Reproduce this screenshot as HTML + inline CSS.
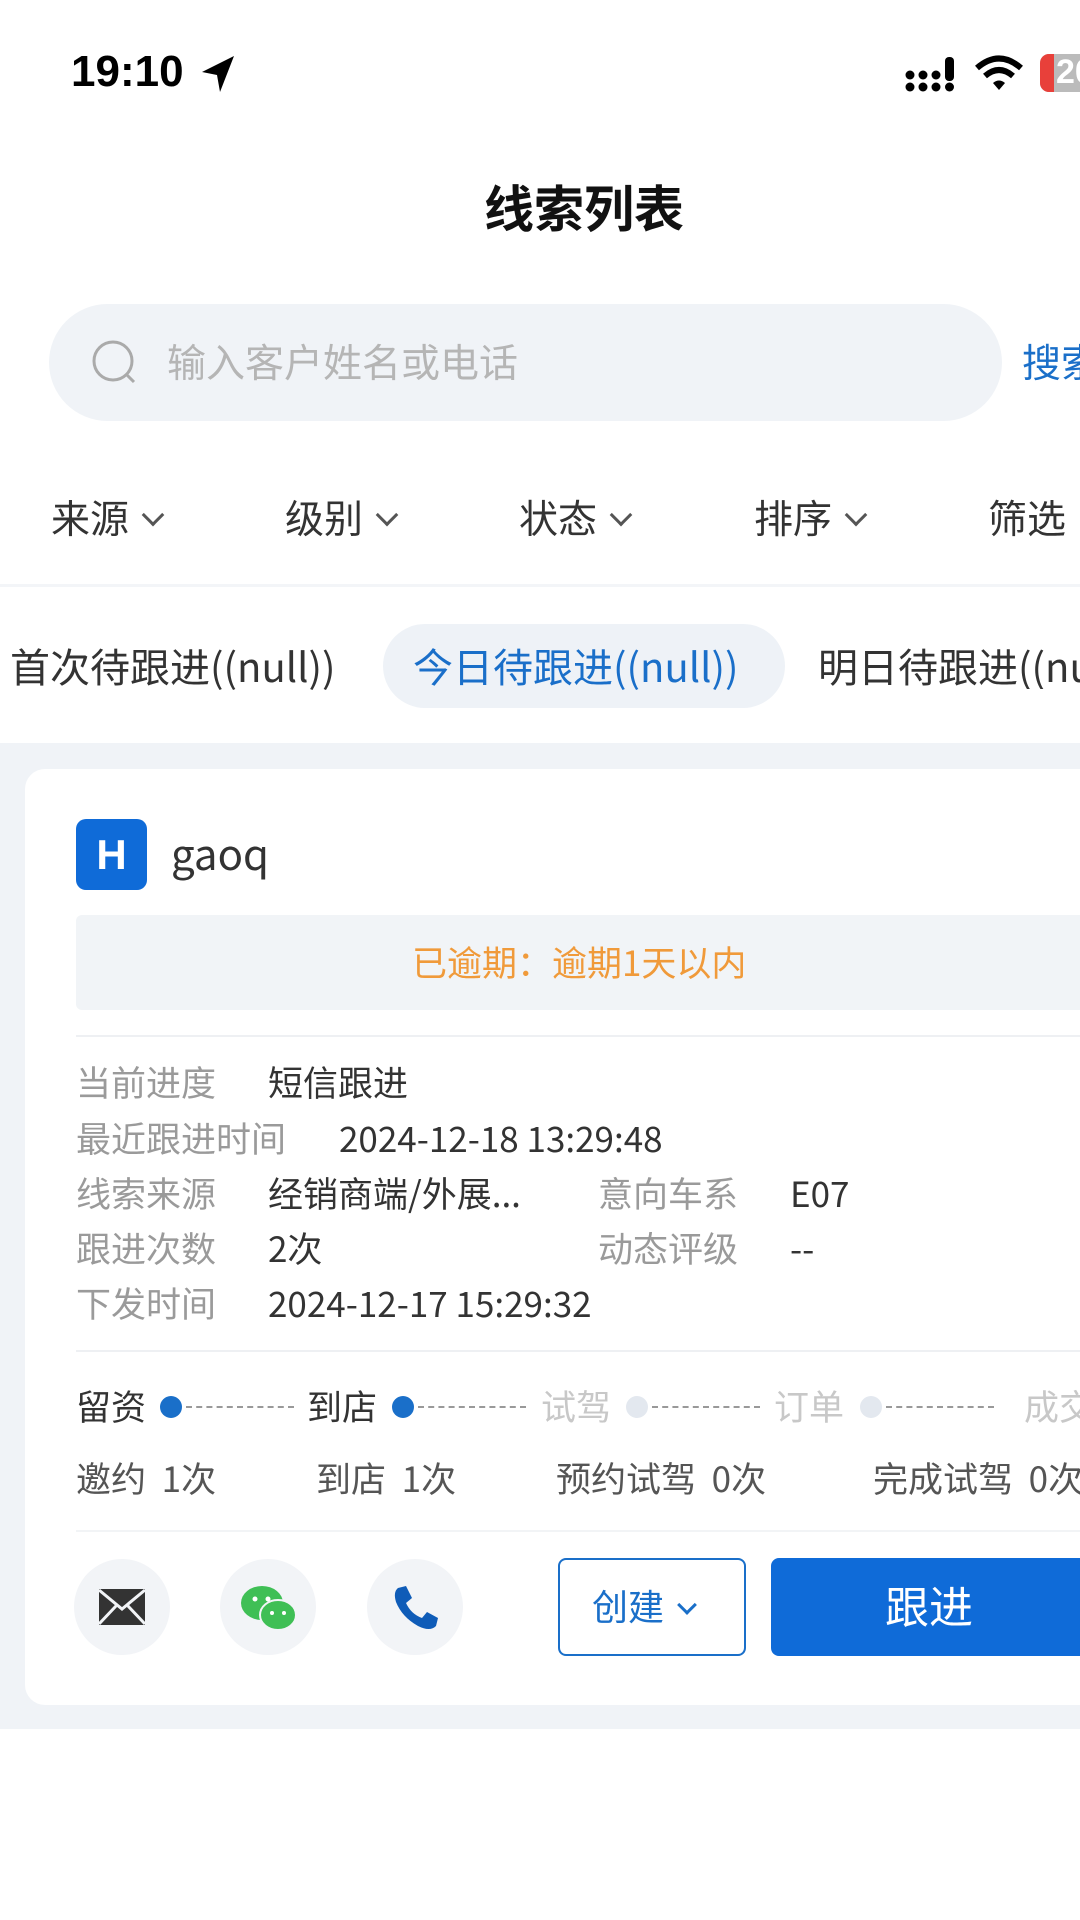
<!DOCTYPE html>
<html><head><meta charset="utf-8"><style>
*{margin:0;padding:0;box-sizing:border-box}
html,body{overflow:hidden}
body{width:1080px;height:1920px;background:#fff;font-family:"Noto Sans CJK SC","Liberation Sans",sans-serif;position:relative;overflow:hidden;color:#333}
.a{position:absolute;white-space:nowrap;line-height:1.2}
.lbl{color:#9a9a9a;font-size:35px}
.val{color:#333;font-size:35px}
.chev{display:inline-block;width:16px;height:16px;border-right:3px solid #555;border-bottom:3px solid #555;transform:rotate(45deg);margin-left:16px;position:relative;top:-10px}
</style></head><body>
<div class="a" style="left:71px;top:46px;font-size:44px;font-weight:bold;color:#000;font-family:'Liberation Sans',sans-serif">19:10</div>
<svg class="a" style="left:200px;top:54px" width="36" height="40" viewBox="0 0 36 40"><path d="M34 2 L2 18 L17 21 L20 38 Z" fill="#000"/></svg>
<svg class="a" style="left:905px;top:55px" width="55" height="38" viewBox="0 0 55 38"><g fill="#000"><circle cx="5" cy="20" r="4.5"/><circle cx="5" cy="32" r="4.5"/><circle cx="18" cy="20" r="4.5"/><circle cx="18" cy="32" r="4.5"/><circle cx="31" cy="20" r="4.5"/><circle cx="31" cy="32" r="4.5"/><rect x="40" y="2" width="9" height="24" rx="4"/><circle cx="44.5" cy="32" r="4.5"/></g></svg>
<svg class="a" style="left:974px;top:55px" width="50" height="38" viewBox="0 0 50 38"><path d="M3 13 Q25 -6 47 13" stroke="#000" stroke-width="6" fill="none"/><path d="M11 21 Q25 9 39 21" stroke="#000" stroke-width="6" fill="none"/><path d="M19 28 L25 35 L31 28 Q25 23 19 28Z" fill="#000"/></svg>
<div class="a" style="left:1040px;top:54px;width:40px;height:38px;border-radius:9px 0 0 9px;background:#bbb;overflow:hidden"><div style="width:14px;height:38px;background:#e8403a"></div><div style="position:absolute;left:16px;top:-2px;font-size:34px;font-weight:bold;color:#fff;font-family:'Liberation Sans',sans-serif">20</div></div>

<div class="a" style="left:484px;top:176px;font-size:50px;font-weight:bold;color:#111">线索列表</div>

<div class="a" style="left:49px;top:304px;width:953px;height:117px;border-radius:59px;background:#f0f3f7"></div>
<svg class="a" style="left:90px;top:338px" width="52" height="52" viewBox="0 0 52 52"><circle cx="23" cy="23" r="19" stroke="#aaa" stroke-width="3" fill="none"/><path d="M37 37 L44 44" stroke="#aaa" stroke-width="3"/></svg>
<div class="a" style="left:167px;top:338px;font-size:39px;color:#b5b5b5">输入客户姓名或电话</div>
<div class="a" style="left:1022px;top:338px;width:58px;overflow:hidden;font-size:39px;color:#1a6fc9">搜索</div>

<div class="a" style="left:51px;top:494px;font-size:39px;color:#333">来源<span class="chev"></span></div>
<div class="a" style="left:285px;top:494px;font-size:39px;color:#333">级别<span class="chev"></span></div>
<div class="a" style="left:519px;top:494px;font-size:39px;color:#333">状态<span class="chev"></span></div>
<div class="a" style="left:754px;top:494px;font-size:39px;color:#333">排序<span class="chev"></span></div>
<div class="a" style="left:988px;top:494px;width:92px;overflow:hidden;font-size:39px;color:#333">筛选</div>
<div class="a" style="left:0;top:584px;width:1080px;height:3px;background:#f3f5f8"></div>

<div class="a" style="left:383px;top:624px;width:402px;height:84px;border-radius:42px;background:#eef2f7"></div>
<div class="a" style="left:10px;top:641px;font-size:40px;color:#333">首次待跟进((null))</div>
<div class="a" style="left:413px;top:641px;font-size:40px;color:#1a6fc9">今日待跟进((null))</div>
<div class="a" style="left:818px;top:641px;width:262px;overflow:hidden;font-size:40px;color:#333">明日待跟进((null))</div>

<div class="a" style="left:0;top:743px;width:1080px;height:986px;background:#f0f3f7"></div>
<div class="a" style="left:25px;top:769px;width:1055px;height:936px;border-radius:20px 0 0 20px;background:#fff;overflow:hidden">

<div class="a" style="left:51px;top:50px;width:71px;height:71px;border-radius:10px;background:#0f6bd8;color:#fff;font-size:42px;font-weight:bold;text-align:center;line-height:71px;font-family:'Liberation Sans',sans-serif">H</div>
<div class="a" style="left:146px;top:59px;font-size:42px;color:#333">gaoq</div>
<div class="a" style="left:51px;top:146px;width:1050px;height:95px;border-radius:6px;background:#f1f4f7"></div>
<div class="a" style="left:387px;top:172px;font-size:35px;color:#f09a3a">已逾期：逾期1天以内</div>
<div class="a" style="left:51px;top:266px;width:1010px;height:2px;background:#eef0f3"></div>

<div class="a lbl" style="left:51px;top:292px">当前进度</div><div class="a val" style="left:243px;top:292px">短信跟进</div>
<div class="a lbl" style="left:51px;top:348px">最近跟进时间</div><div class="a val" style="left:314px;top:348px">2024-12-18 13:29:48</div>
<div class="a lbl" style="left:51px;top:403px">线索来源</div><div class="a val" style="left:243px;top:403px">经销商端/外展...</div>
<div class="a lbl" style="left:573px;top:403px">意向车系</div><div class="a val" style="left:765px;top:403px">E07</div>
<div class="a lbl" style="left:51px;top:458px">跟进次数</div><div class="a val" style="left:243px;top:458px">2次</div>
<div class="a lbl" style="left:573px;top:458px">动态评级</div><div class="a val" style="left:765px;top:458px">--</div>
<div class="a lbl" style="left:51px;top:513px">下发时间</div><div class="a val" style="left:243px;top:513px">2024-12-17 15:29:32</div>
<div class="a" style="left:51px;top:581px;width:1010px;height:2px;background:#eef0f3"></div>

<div class="a" style="left:51px;top:616px;font-size:35px;color:#333">留资</div>
<div class="a" style="left:135px;top:627px;width:22px;height:22px;border-radius:50%;background:#1a6fc9"></div>
<div class="a" style="left:161px;top:637px;width:108px;border-top:2px dashed #999"></div>
<div class="a" style="left:282px;top:616px;font-size:35px;color:#333">到店</div>
<div class="a" style="left:367px;top:627px;width:22px;height:22px;border-radius:50%;background:#1a6fc9"></div>
<div class="a" style="left:393px;top:637px;width:108px;border-top:2px dashed #999"></div>
<div class="a" style="left:516px;top:616px;font-size:35px;color:#c8c8c8">试驾</div>
<div class="a" style="left:601px;top:627px;width:22px;height:22px;border-radius:50%;background:#e3e8ef"></div>
<div class="a" style="left:627px;top:637px;width:108px;border-top:2px dashed #999"></div>
<div class="a" style="left:749px;top:616px;font-size:35px;color:#c8c8c8">订单</div>
<div class="a" style="left:835px;top:627px;width:22px;height:22px;border-radius:50%;background:#e3e8ef"></div>
<div class="a" style="left:861px;top:637px;width:108px;border-top:2px dashed #999"></div>
<div class="a" style="left:999px;top:616px;font-size:35px;color:#c8c8c8">成交</div>

<div class="a" style="left:51px;top:688px;font-size:35px;color:#555">邀约&nbsp; 1次</div>
<div class="a" style="left:291px;top:688px;font-size:35px;color:#555">到店&nbsp; 1次</div>
<div class="a" style="left:531px;top:688px;font-size:35px;color:#555">预约试驾&nbsp; 0次</div>
<div class="a" style="left:848px;top:688px;font-size:35px;color:#555">完成试驾&nbsp; 0次</div>
<div class="a" style="left:51px;top:761px;width:1010px;height:2px;background:#f2f4f6"></div>

<div class="a" style="left:49px;top:790px;width:96px;height:96px;border-radius:50%;background:#f2f4f7"></div>
<svg class="a" style="left:73px;top:819px" width="48" height="38" viewBox="0 0 48 38"><rect x="1" y="1" width="46" height="36" fill="#333"/><path d="M1 2 L24 21 L47 2 M1 36 L18 18 M47 36 L30 18" stroke="#f2f4f7" stroke-width="3" fill="none"/></svg>
<div class="a" style="left:195px;top:790px;width:96px;height:96px;border-radius:50%;background:#f2f4f7"></div>
<svg class="a" style="left:215px;top:816px" width="58" height="46" viewBox="0 0 58 46"><ellipse cx="22" cy="18" rx="21" ry="17" fill="#3fbf55"/><ellipse cx="38" cy="30" rx="18" ry="15" fill="#3fbf55" stroke="#f2f4f7" stroke-width="2"/><circle cx="15" cy="14" r="2.5" fill="#fff"/><circle cx="28" cy="14" r="2.5" fill="#fff"/><circle cx="32" cy="28" r="2" fill="#fff"/><circle cx="44" cy="28" r="2" fill="#fff"/></svg>
<div class="a" style="left:342px;top:790px;width:96px;height:96px;border-radius:50%;background:#f2f4f7"></div>
<svg class="a" style="left:367px;top:815px" width="48" height="48" viewBox="0 0 48 48"><path d="M6 4 L14 2 L20 14 L14 19 Q19 30 30 34 L35 28 L46 34 L44 42 Q38 48 26 42 Q10 33 4 18 Q1 8 6 4Z" fill="#0f5cb8"/></svg>

<div class="a" style="left:533px;top:789px;width:188px;height:98px;border:2px solid #1a6fc9;border-radius:8px"></div>
<div class="a" style="left:567px;top:815px;font-size:36px;color:#1a6fc9">创建<span class="chev" style="border-color:#1a6fc9;width:14px;height:14px;top:-8px"></span></div>
<div class="a" style="left:746px;top:789px;width:340px;height:98px;border-radius:8px;background:#0f6bd8"></div>
<div class="a" style="left:860px;top:809px;font-size:44px;color:#fff">跟进</div>
</div>
</body></html>
